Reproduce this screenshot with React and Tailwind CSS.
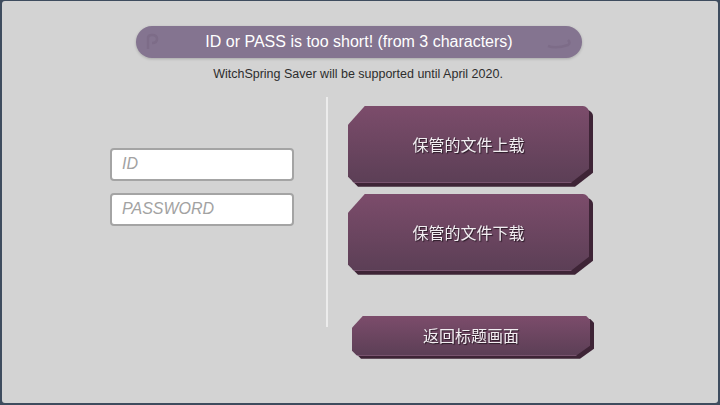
import React from "react";

const cjk = { fontFamily: '"Noto Sans CJK SC", "Noto Sans", sans-serif' };

function GameButton({ label, big }) {
  return (
    <div className={big ? "w-[241px] h-[77px] drop-shadow-[4px_4px_0_#3e2436]" : "w-[238px] h-[40px] drop-shadow-[4px_3px_0_#3e2436]"}>
      <div
        className={
          (big
            ? "[clip-path:polygon(17px_0,calc(100%-4px)_0,100%_4px,100%_calc(100%-14px),calc(100%-18px)_100%,6px_100%,0_calc(100%-6px),0_19px)] rounded-tr-[6px] "
            : "[clip-path:polygon(11px_0,calc(100%-4px)_0,100%_4px,100%_calc(100%-10px),calc(100%-14px)_100%,5px_100%,0_calc(100%-5px),0_12px)] ") +
          "w-full h-full bg-gradient-to-b from-[#7c4c6b] to-[#5c3f56] flex items-center justify-center border-b border-[#8e6483]"
        }
      >
        <span
          className="text-[#f2eef2] text-[16px] [text-shadow:1px_1px_1px_#2a1a26]"
          style={cjk}
        >
          {label}
        </span>
      </div>
    </div>
  );
}

export default function App() {
  return (
    <div className="w-[720px] h-[405px] bg-[#3e4c5e] p-[1px_2px_2px_2px]">
      <div className="w-full h-full bg-[#d3d3d3] rounded-[3px] flex flex-col" style={{ fontFamily: '"Liberation Sans", Arial, sans-serif' }}>
        <div className="mt-[25px] ml-[134px] w-[446px] h-[32px] rounded-full bg-[#847490] shadow-[0_1px_3px_rgba(0,0,0,0.2)] flex items-center justify-center relative">
          <svg className="absolute left-[8px] top-[6px]" width="20" height="20" viewBox="0 0 20 20">
            <path d="M4 17 V6 Q4 3 8 3 Q13 3 13 7 Q13 11 8 11" fill="none" stroke="#7d6c88" strokeWidth="2.5" />
          </svg>
          <svg className="absolute right-[10px] top-[10px]" width="26" height="14" viewBox="0 0 26 14">
            <path d="M2 10 Q10 13 22 9 Q25 7 22 4" fill="none" stroke="#7d6c88" strokeWidth="2.5" />
          </svg>
          <span className="text-white text-[16px]">ID or PASS is too short! (from 3 characters)</span>
        </div>
        <div className="mt-[7px] text-center text-[12.5px] text-[#2d2d2d] pr-[4px]">
          WitchSpring Saver will be supported until April 2020.
        </div>
        <div className="flex mt-[13px]">
          <div className="w-[324px] pl-[108px] pt-[51px] flex flex-col gap-[12px]">
            <div className="w-[184px] h-[33px] bg-white border-2 border-[#a4a4a4] rounded-[4px] flex items-center px-[10px]">
              <span className="italic text-[#a2a2a2] text-[16px]">ID</span>
            </div>
            <div className="w-[184px] h-[33px] bg-white border-2 border-[#a4a4a4] rounded-[4px] flex items-center px-[10px]">
              <span className="italic text-[#a2a2a2] text-[16px]">PASSWORD</span>
            </div>
          </div>
          <div className="w-[2px] h-[230px] bg-[#ececec]" />
          <div className="flex flex-col pl-[20px] pt-[9px]">
            <GameButton big label="保管的文件上载" />
            <div className="h-[11px]" />
            <GameButton big label="保管的文件下载" />
            <div className="h-[45px]" />
            <div className="pl-[4px]">
              <GameButton label="返回标题画面" />
            </div>
          </div>
        </div>
      </div>
    </div>
  );
}
